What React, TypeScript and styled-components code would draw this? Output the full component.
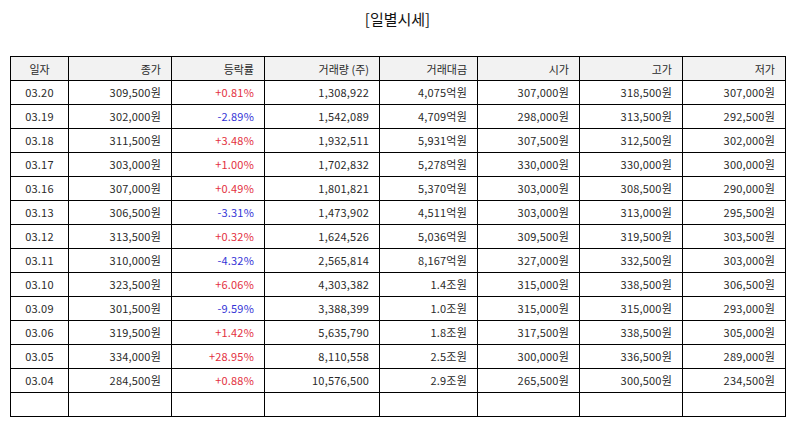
import React from 'react';
import styled, { createGlobalStyle } from 'styled-components';

type Row = {
  date: string;
  close: string;
  rate: string;
  volume: string;
  amount: string;
  open: string;
  high: string;
  low: string;
};

const rows: Row[] = [
  { date: '03.20', close: '309,500원', rate: '+0.81%', volume: '1,308,922', amount: '4,075억원', open: '307,000원', high: '318,500원', low: '307,000원' },
  { date: '03.19', close: '302,000원', rate: '-2.89%', volume: '1,542,089', amount: '4,709억원', open: '298,000원', high: '313,500원', low: '292,500원' },
  { date: '03.18', close: '311,500원', rate: '+3.48%', volume: '1,932,511', amount: '5,931억원', open: '307,500원', high: '312,500원', low: '302,000원' },
  { date: '03.17', close: '303,000원', rate: '+1.00%', volume: '1,702,832', amount: '5,278억원', open: '330,000원', high: '330,000원', low: '300,000원' },
  { date: '03.16', close: '307,000원', rate: '+0.49%', volume: '1,801,821', amount: '5,370억원', open: '303,000원', high: '308,500원', low: '290,000원' },
  { date: '03.13', close: '306,500원', rate: '-3.31%', volume: '1,473,902', amount: '4,511억원', open: '303,000원', high: '313,000원', low: '295,500원' },
  { date: '03.12', close: '313,500원', rate: '+0.32%', volume: '1,624,526', amount: '5,036억원', open: '309,500원', high: '319,500원', low: '303,500원' },
  { date: '03.11', close: '310,000원', rate: '-4.32%', volume: '2,565,814', amount: '8,167억원', open: '327,000원', high: '332,500원', low: '303,000원' },
  { date: '03.10', close: '323,500원', rate: '+6.06%', volume: '4,303,382', amount: '1.4조원', open: '315,000원', high: '338,500원', low: '306,500원' },
  { date: '03.09', close: '301,500원', rate: '-9.59%', volume: '3,388,399', amount: '1.0조원', open: '315,000원', high: '315,000원', low: '293,000원' },
  { date: '03.06', close: '319,500원', rate: '+1.42%', volume: '5,635,790', amount: '1.8조원', open: '317,500원', high: '338,500원', low: '305,000원' },
  { date: '03.05', close: '334,000원', rate: '+28.95%', volume: '8,110,558', amount: '2.5조원', open: '300,000원', high: '336,500원', low: '289,000원' },
  { date: '03.04', close: '284,500원', rate: '+0.88%', volume: '10,576,500', amount: '2.9조원', open: '265,500원', high: '300,500원', low: '234,500원' },
];

const headers = ['일자', '종가', '등락률', '거래량 (주)', '거래대금', '시가', '고가', '저가'];
const widths = [58, 103, 93, 115, 98, 102, 103, 103];

const GlobalStyle = createGlobalStyle`
  html, body {
    margin: 0;
    padding: 0;
    background: #ffffff;
  }
  body {
    font-family: "Noto Sans CJK KR", "Noto Sans", sans-serif;
    color: #2a2a2a;
  }
`;

const Page = styled.div`
  width: 794px;
  height: 425px;
  padding: 6px 9px 0 10px;
  box-sizing: border-box;
`;

const Title = styled.h1`
  margin: 0 0 25px;
  height: 25px;
  line-height: 25px;
  text-align: center;
  font-size: 15px;
  font-weight: 400;
  color: #111111;
`;

const Table = styled.table`
  width: 776px;
  border-collapse: collapse;
  table-layout: fixed;
  font-size: 11px;
`;

const HeadCell = styled.th<{ $center?: boolean }>`
  height: 23px;
  padding: ${(p) => (p.$center ? '0 4px' : '0 10px 0 4px')};
  border: 1px solid #000000;
  background: #f2f2f2;
  font-weight: 400;
  color: #2a2a2a;
  text-align: ${(p) => (p.$center ? 'center' : 'right')};
  white-space: nowrap;
`;

const Cell = styled.td<{ $center?: boolean; $tone?: 'up' | 'down' }>`
  height: 23px;
  padding: ${(p) => (p.$center ? '0 4px' : '0 10px 0 4px')};
  border: 1px solid #000000;
  text-align: ${(p) => (p.$center ? 'center' : 'right')};
  color: ${(p) => (p.$tone === 'up' ? '#e3303e' : p.$tone === 'down' ? '#3434d6' : '#2a2a2a')};
  white-space: nowrap;
  line-height: 1;
  letter-spacing: 0.2px;
`;

const App: React.FC = () => (
  <Page>
    <GlobalStyle />
    <Title>[일별시세]</Title>
    <Table>
      <colgroup>
        {widths.map((w, i) => (
          <col key={i} style={{ width: w }} />
        ))}
      </colgroup>
      <thead>
        <tr>
          {headers.map((h, i) => (
            <HeadCell key={h} $center={i === 0}>
              {h}
            </HeadCell>
          ))}
        </tr>
      </thead>
      <tbody>
        {rows.map((r) => (
          <tr key={r.date}>
            <Cell $center>{r.date}</Cell>
            <Cell>{r.close}</Cell>
            <Cell $tone={r.rate.startsWith('+') ? 'up' : 'down'}>{r.rate}</Cell>
            <Cell>{r.volume}</Cell>
            <Cell>{r.amount}</Cell>
            <Cell>{r.open}</Cell>
            <Cell>{r.high}</Cell>
            <Cell>{r.low}</Cell>
          </tr>
        ))}
        <tr>
          {widths.map((_, i) => (
            <Cell key={i} $center={i === 0} />
          ))}
        </tr>
      </tbody>
    </Table>
  </Page>
);

export default App;
